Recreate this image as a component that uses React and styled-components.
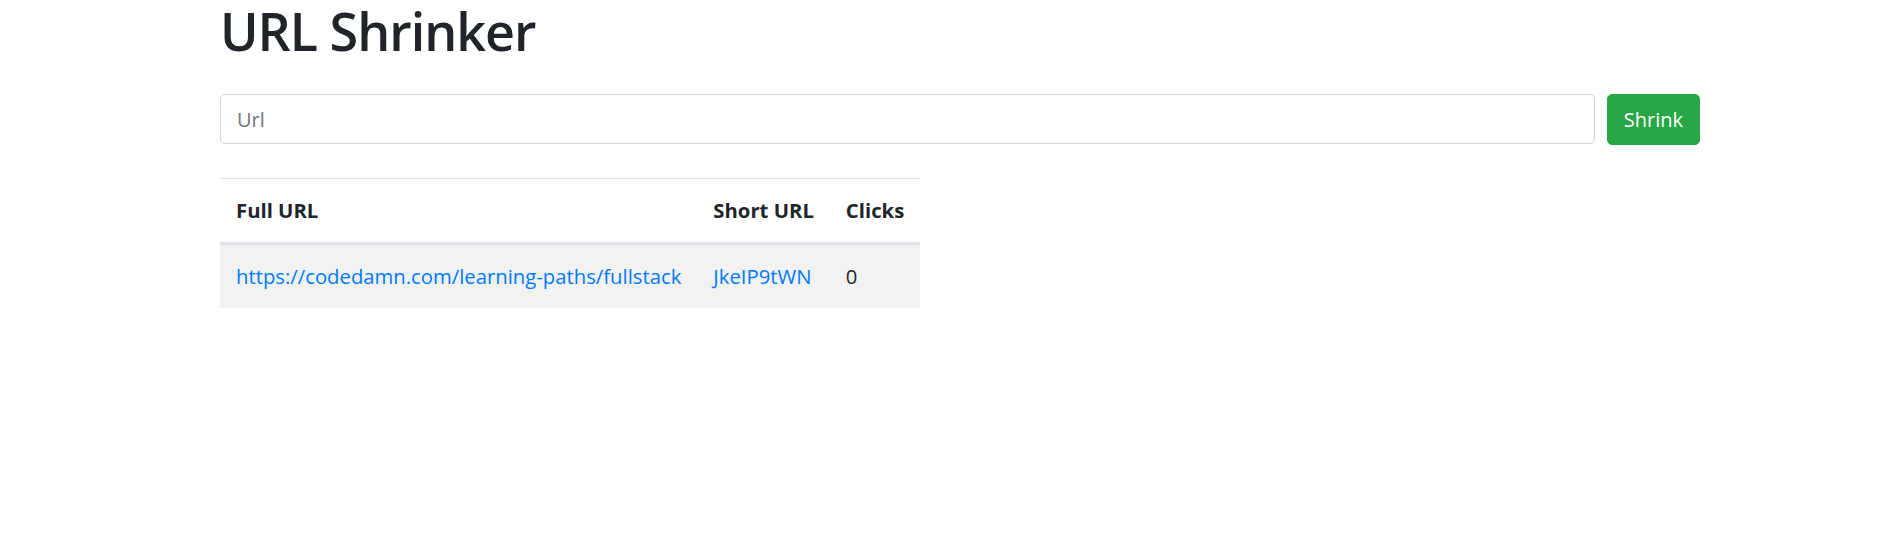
import React from 'react';
import styled, { createGlobalStyle } from 'styled-components';

const GlobalStyle = createGlobalStyle`
    body {
        margin: 0;
        background: #fff;
        font-family: "Open Sans", "Noto Sans", sans-serif;
        color: #212529;
    }
`;

const Page = styled.div`
    width: 1480px;
    margin-left: 220px;
`;

const Title = styled.h1`
    margin: 0;
    font-size: 52px;
    font-weight: 600;
    letter-spacing: -1px;
    line-height: 1.2;
    color: #212529;
`;

const ShrinkForm = styled.form`
    display: flex;
    gap: 12px;
    margin-top: 32px;
`;

const UrlInput = styled.input`
    flex: 1;
    height: 50px;
    box-sizing: border-box;
    padding: 0 16px;
    border: 1px solid #ced4da;
    border-radius: 5px;
    font-family: inherit;
    font-size: 20px;
    color: #495057;
    outline: none;

    &::placeholder {
        color: #6c757d;
    }
`;

const Button = styled.button`
    height: 51px;
    padding: 0 16px;
    border: 1px solid #28a745;
    border-radius: 5px;
    background: #28a745;
    color: #fff;
    font-family: inherit;
    font-size: 20px;
    cursor: pointer;
`;

const Table = styled.table`
    margin-top: 33px;
    border-collapse: collapse;
    font-size: 20.3px;
    line-height: 31px;

    th, td {
        padding: 16px;
        text-align: left;
        vertical-align: top;
        white-space: nowrap;
    }

    th {
        font-weight: 700;
        border-top: 1px solid #dee2e6;
        border-bottom: 3px solid #dee2e6;
    }

    tbody tr:nth-child(odd) {
        background: #f2f2f2;
    }

    a {
        color: #007bff;
        text-decoration: none;
    }
`;

const urls = [
    { full: 'https://codedamn.com/learning-paths/fullstack', short: 'JkeIP9tWN', clicks: 0 },
];

export default () => {
    return <>
        <GlobalStyle />
        <Page>
            <Title>URL Shrinker</Title>
            <ShrinkForm onSubmit={e => e.preventDefault()}>
                <UrlInput type="url" name="fullUrl" placeholder="Url" />
                <Button type="submit">Shrink</Button>
            </ShrinkForm>
            <Table>
                <thead>
                    <tr>
                        <th>Full URL</th>
                        <th>Short URL</th>
                        <th>Clicks</th>
                    </tr>
                </thead>
                <tbody>
                    {urls.map(u => <tr key={u.short}>
                        <td><a href={u.full}>{u.full}</a></td>
                        <td><a href={u.short}>{u.short}</a></td>
                        <td>{u.clicks}</td>
                    </tr>)}
                </tbody>
            </Table>
        </Page>
    </>;
};
